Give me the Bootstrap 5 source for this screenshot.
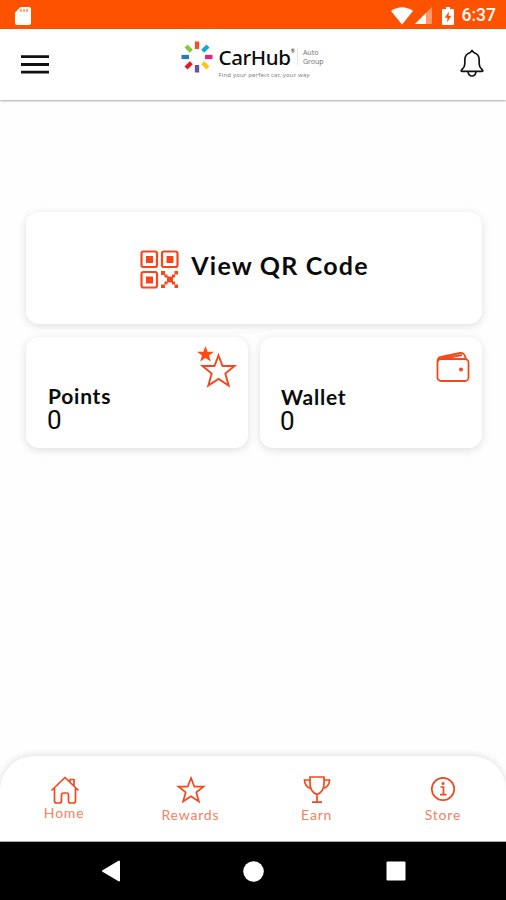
<!DOCTYPE html>
<html lang="en">
<head>
<meta charset="utf-8">
<meta name="viewport" content="width=device-width, initial-scale=1">
<title>CarHub Auto Group</title>
<link href="https://cdn.jsdelivr.net/npm/bootstrap@5.3.0/dist/css/bootstrap.min.css" rel="stylesheet">
<style>
  :root { --brand: #ff5200; }
  body { font-family: Lato, "Liberation Sans", sans-serif; color: #0b0b0b; background: #fefefe; }
  svg { display: block; flex: none; overflow: visible; }
  .status-bar { height: 29px; background: var(--brand); padding: 2px 10px 0 14px; }
  .clock { font: 500 17.5px/27px Roboto, sans-serif; margin-left: 8px; }
  .top-bar { height: 71px; padding: 0 22px 0 21px; box-shadow: 0 1px 2px rgba(0,0,0,.34); z-index: 1; }
  .menu-btn { width: 28px; }
  .bell-btn { width: 24px; padding-bottom: 3px !important; }
  .brand-logo { width: 147px; margin-right: 1px; padding-bottom: 8px; }
  .logo-copy { padding-left: 6px; padding-top: 4px; }
  .brand-word { font: 500 20.5px/25px "Noto Sans", sans-serif; letter-spacing: -.35px; }
  .reg { font-size: 5px; line-height: 12px; }
  .brand-group { font: 7px/9px "Noto Sans", sans-serif; color: #777; border-left: 1px solid #e6e6e6; padding-left: 5px; margin: 3px 0 0 2px; height: 18px; }
  .brand-tag { font: 6px/11px "Noto Sans", sans-serif; color: #808080; letter-spacing: .16px; white-space: nowrap; }
  .content { padding: 112px 24px 0 26px; }
  .tile { border: 0; border-radius: 13px; background: #fff; box-shadow: 0 2px 9px rgba(0,0,0,.13); }
  .tile-qr { height: 112px; padding: 2px 0 0 1px; }
  .qr-label { font-size: 25px; line-height: 30px; font-weight: 700; letter-spacing: 1.2px; margin: -8px 0 0 12px; }
  .tile-pair { gap: 12px; margin-top: 13px; }
  .tile-stat { height: 111px; padding: 48px 21px 0 22px; }
  .tile-stat.wallet { padding: 49px 21px 0 21px; }
  .stat-name { font-size: 21px; line-height: 22px; font-weight: 700; letter-spacing: .75px; }
  .stat-value { font: 26px/26px Roboto, sans-serif; margin-left: -1px; }
  .tile-icon { top: 9px; right: 12px; }
  .wallet .tile-icon { top: 14px; right: 12px; }
  .tab-bar { height: 86px; padding-left: 1px; border-radius: 34px 34px 0 0; background: #fff; box-shadow: 0 -1px 7px rgba(0,0,0,.13); border-bottom: 1px solid #aaa; }
  .tab { color: #f78063; font-size: 14px; line-height: 17px; letter-spacing: .8px; padding-top: 20px; text-decoration: none; }
  .tab svg { margin: 0 0 2px 1px; }
  .tab.home svg { margin-bottom: 0; }
  .system-bar { height: 58px; background: #000; padding: 0 100px 0 101px; }
</style>
</head>
<body class="vh-100 d-flex flex-column overflow-hidden">

<div class="status-bar d-flex align-items-center text-white flex-shrink-0">
  <svg width="18" height="20" viewBox="0 0 18 20"><path d="M6.500 1H15Q17 1 17 3V17Q17 19 15 19H3Q1 19 1 17V6.500Z" fill="#fff"/><path d="M7 3v3M10 3v3M13 3v3" stroke="#ff8a50" stroke-width="1.500"/></svg>
  <svg class="ms-auto" width="22" height="18" viewBox="0 0 22 18"><path d="M0 4Q11-3.500 22 4L11 17.500Z" fill="#fff"/></svg>
  <svg width="17" height="17" viewBox="0 0 17 17" style="margin-left:2px"><path d="M17 0V17H0Z" fill="#ff9a68"/><path d="M11 6V17H0Z" fill="#fff"/></svg>
  <svg width="12" height="18" viewBox="0 0 12 18" style="margin-left:10px"><path d="M4 0h4v2h3q1 0 1 1v14q0 1-1 1H1q-1 0-1-1V3q0-1 1-1h3Z" fill="#fff"/><path d="M7 4.500 2.700 10.700H5.500L5 15.500 9.300 9H6.600Z" fill="#ff5200"/></svg>
  <span class="clock">6:37</span>
</div>

<header class="top-bar d-flex align-items-center justify-content-between bg-white position-relative flex-shrink-0">
  <button class="menu-btn btn p-0 border-0" aria-label="Menu">
    <svg width="28" height="20" viewBox="0 0 28 20"><path d="M0 1.700h28M0 9.500h28M0 17.200h28" stroke="#111" stroke-width="2.800"/></svg>
  </button>
  <div class="brand-logo d-flex align-items-start">
    <svg width="32" height="32" viewBox="-16 -16 32 32" stroke-width="4.300">
      <path d="M0-8V-15.500" stroke="#ef5130"/><path d="M5.700-5.700 11-11" stroke="#14a9cd"/><path d="M8 0H15.500" stroke="#de2785"/><path d="M5.700 5.700 11 11" stroke="#f8c71a"/><path d="M0 8V15.500" stroke="#6450a8"/><path d="M-5.700 5.700-11 11" stroke="#e11a2c"/><path d="M-8 0H-15.500" stroke="#2878bc"/><path d="M-5.700-5.700-11-11" stroke="#85c83c"/>
    </svg>
    <div class="logo-copy">
      <div class="d-flex">
        <span class="brand-word">CarHub</span><span class="reg">®</span>
        <span class="brand-group">Auto<br>Group</span>
      </div>
      <div class="brand-tag">Find your perfect car, your way</div>
    </div>
  </div>
  <button class="bell-btn btn p-0 border-0" aria-label="Notifications">
    <svg width="24" height="28" viewBox="0 0 24 28" fill="none" stroke="#111" stroke-width="1.700" stroke-linejoin="round"><path d="M12 1.500 10.300 3.500Q4.800 5 4.800 11V15Q4.800 18 2 20.500Q.300 22.300 2 22.300H22Q23.700 22.300 22 20.500Q19.200 18 19.200 15V11Q19.200 5 13.700 3.500Z"/><path d="M8 22.500Q8.500 27 12 27T16 22.500"/></svg>
  </button>
</header>

<main class="content flex-grow-1">
  <a class="tile tile-qr card flex-row align-items-center justify-content-center text-reset text-decoration-none" href="#">
    <svg width="39" height="39" viewBox="0 0 39 39" fill="none" stroke="#f4471c" stroke-width="2.200">
      <rect x="1.500" y="1.500" width="15.500" height="15.500" rx="2"/><rect x="22" y="1.500" width="15.500" height="15.500" rx="2"/><rect x="1.500" y="22" width="15.500" height="15.500" rx="2"/>
      <g fill="#f4471c" stroke="none"><path d="M6 6h7v7H6zM26.500 6h7v7h-7zM6 26.500h7v7H6zM21 21h4v4h-4zM34.500 21H38v3.500h-3.500zM27 26.500h6v6h-6zM24.500 24.500h3v3h-3zM32 24.500h3v3h-3zM24.500 31.500h3v3h-3zM32 31.500h3v3h-3zM21 34.500h4V38h-4zM34.500 34.500H38V38h-3.500z"/></g>
    </svg>
    <span class="qr-label">View QR Code</span>
  </a>
  <div class="tile-pair d-flex">
    <div class="tile tile-stat card flex-fill w-50">
      <svg class="tile-icon position-absolute" width="40" height="42" viewBox="0 0 40 42"><path d="M9.500 0 11.600 5.800H18L13 9.600 14.800 15.500 9.500 12 4.200 15.500 6 9.600 1 5.800H7.400Z" fill="#ff4a10"/><path d="M22.500 9.500 26.500 20H38.500L29.300 27.500 32.700 39.500 22.500 33 12.300 39.500 15.700 27.500 6.500 20H18.500Z" fill="#fff" stroke="#f4471c" stroke-width="1.900"/></svg>
      <div class="stat-name">Points</div>
      <div class="stat-value">0</div>
    </div>
    <div class="tile tile-stat wallet card flex-fill w-50">
      <svg class="tile-icon position-absolute" width="34" height="32" viewBox="0 0 34 32" fill="none" stroke="#f4471c" stroke-width="1.800"><rect x="1.500" y="8" width="31" height="22" rx="3.500"/><path d="M1.500 11Q1.500 6.500 5 6L24 2Q27.500 1.500 28.500 4L30 8M5 8 26 4"/><circle cx="25" cy="18.500" r="2" fill="#f4471c" stroke="none"/></svg>
      <div class="stat-name">Wallet</div>
      <div class="stat-value">0</div>
    </div>
  </div>
</main>

<nav class="tab-bar d-flex flex-shrink-0">
  <a class="tab home flex-fill w-25 d-flex flex-column align-items-center" href="#">
    <svg width="28" height="28" viewBox="0 0 28 28" fill="none" stroke="#f4471c" stroke-width="1.700" stroke-linejoin="round" stroke-linecap="round"><path d="M1 14 14 1.500 27 14M3.500 12.500V25Q3.500 27 5.500 27H8.500Q10.500 27 10.500 25V19Q10.500 17 12.500 17H15.500Q17.500 17 17.500 19V25Q17.500 27 19.500 27H22.500Q24.500 27 24.500 25V12.500M19 5.500V3.500H23V9.500"/></svg>
    <span>Home</span>
  </a>
  <a class="tab flex-fill w-25 d-flex flex-column align-items-center" href="#">
    <svg width="28" height="28" viewBox="0 0 28 28" fill="none" stroke="#f4471c" stroke-width="1.700"><path d="M14 2 17.300 10.600H26.500L19.300 16.300 21.900 25.500 14 20.300 6.100 25.500 8.700 16.300 1.500 10.600H10.700Z"/></svg>
    <span>Rewards</span>
  </a>
  <a class="tab flex-fill w-25 d-flex flex-column align-items-center" href="#">
    <svg width="28" height="28" viewBox="0 0 28 28" fill="none" stroke="#f4471c" stroke-width="1.700"><path d="M7 1H21V7Q21 16 14 18.500Q7 16 7 7ZM7 4H1.500Q1.500 11 8.500 12.500M21 4H26.500Q26.500 11 19.500 12.500M14 18.500V26M9 26.200H19"/></svg>
    <span>Earn</span>
  </a>
  <a class="tab flex-fill w-25 d-flex flex-column align-items-center" href="#">
    <svg width="28" height="28" viewBox="0 0 28 28" fill="none" stroke="#f4471c" stroke-width="1.700"><circle cx="14" cy="13" r="11.200"/><path d="M11.500 11H14.500V18.500M11 18.700H17.500"/><circle cx="14" cy="7.500" r="1.500" fill="#f4471c" stroke="none"/></svg>
    <span>Store</span>
  </a>
</nav>

<div class="system-bar d-flex align-items-center justify-content-between flex-shrink-0">
  <svg width="20" height="22" viewBox="0 0 20 22"><path d="M18 1.500V20.500L2 11Z" fill="#fff" stroke="#fff" stroke-width="2" stroke-linejoin="round"/></svg>
  <svg width="21" height="21" viewBox="0 0 21 21"><circle cx="10.500" cy="10.500" r="10.300" fill="#fff"/></svg>
  <svg width="20" height="20" viewBox="0 0 20 20"><rect x=".5" y=".5" width="19" height="19" rx="1" fill="#fff"/></svg>
</div>

<script src="https://cdn.jsdelivr.net/npm/bootstrap@5.3.0/dist/js/bootstrap.bundle.min.js"></script>
</body>
</html>
